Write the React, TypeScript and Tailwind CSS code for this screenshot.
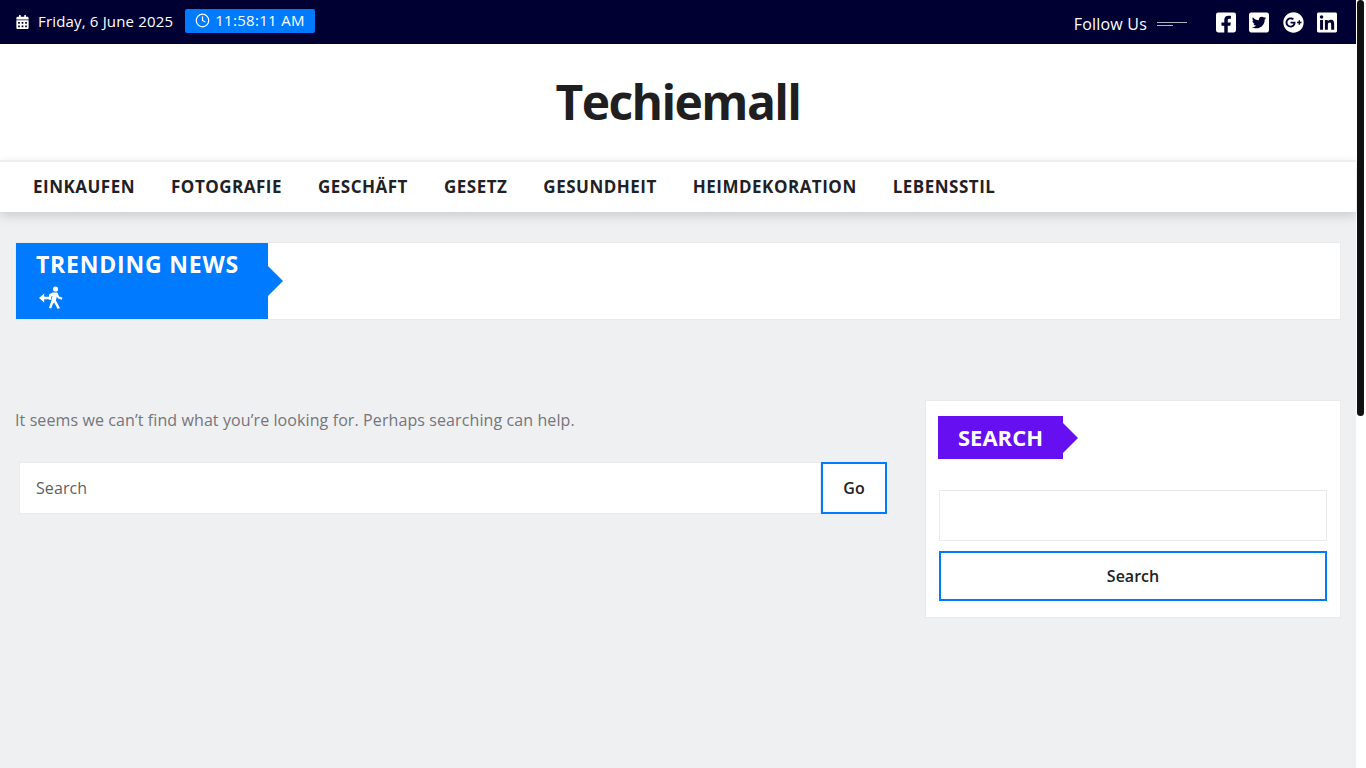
import { Clock } from "lucide-react";
import { FaFacebookSquare, FaTwitterSquare, FaGooglePlus, FaLinkedin, FaCalendarAlt } from "react-icons/fa";

const menu = ["EINKAUFEN", "FOTOGRAFIE", "GESCHÄFT", "GESETZ", "GESUNDHEIT", "HEIMDEKORATION", "LEBENSSTIL"];

function WalkIcon() {
  return (
    <svg width="26" height="24" viewBox="0 0 26 24" fill="white" className="block">
      <circle cx="17.500" cy="3" r="2.600" />
      <path d="M14.500 6.500h4.800l1.900 4 3.300 1.300-.8 2-4-1.600-.8-1.600-1 3.800 4 7.500-2.300 1-3.400-6.500-1.300 1.500-1.700 4.700-2.200-.8 2-5.700 1.500-6-1.300.7v3h-2.200V8.600z" />
      <path d="M1 12l5.200-4.400v3.100h5.800v2.600H6.200v3.100z" />
    </svg>
  );
}

export default function App() {
  return (
    <div className="flex h-screen overflow-hidden bg-white font-['Open_Sans','Noto_Sans',sans-serif]">
      <div className="flex flex-col w-[1356px] shrink-0 bg-[#eff0f2]">
        {/* top bar */}
        <div className="h-[44px] bg-[#000033] flex items-center justify-between pl-4 pr-[19px] text-white shrink-0">
          <div className="flex items-center">
            <FaCalendarAlt className="w-[13px] h-[14px]" />
            <span className="ml-[9px] text-[15px] leading-none mb-0.5 tracking-[0.17px]">Friday, 6 June 2025</span>
            <div className="ml-[12px] mb-[3px] h-[24px] w-[130px] bg-[#007bff] rounded-[2px] flex items-center pl-[10px]">
              <Clock className="w-[15px] h-[15px]" strokeWidth={2} />
              <span className="ml-[5px] text-[15px] leading-none tracking-[0.3px]">11:58:11 AM</span>
            </div>
          </div>
          <div className="flex items-center">
            <span className="text-[16px] leading-none mt-1 tracking-[0.2px]">Follow Us</span>
            <div className="ml-[10px] mr-[29px] flex flex-col gap-[2px] mt-[3px]">
              <div className="w-[30px] h-px bg-white/70" />
              <div className="w-[16px] h-px bg-white/70" />
            </div>
            <div className="flex items-center">
              <FaFacebookSquare className="w-[20px] h-[23px] mr-[13px]" />
              <FaTwitterSquare className="w-[20px] h-[23px] mr-[14px]" />
              <FaGooglePlus className="w-[21px] h-[23px] mr-[13px]" />
              <FaLinkedin className="w-[20px] h-[23px]" />
            </div>
          </div>
        </div>

        {/* site title */}
        <div className="h-[116px] bg-white flex items-center justify-center shrink-0">
          <h1 className="text-[48px] font-bold leading-none text-[#1f1f22] tracking-[-1.6px]">Techiemall</h1>
        </div>

        {/* menu */}
        <nav className="h-[52px] bg-white border-t-2 border-[#eceef0] shadow-[0_4px_10px_rgba(0,0,0,0.15)] flex items-center pl-[15px] shrink-0 z-10">
          {menu.map((m) => (
            <a key={m} className="px-[18px] text-[17px] font-bold text-[#212125] tracking-[0.5px] leading-[16px]">{m}</a>
          ))}
        </nav>

        {/* trending */}
        <div className="mx-[15px] mt-[30px] h-[78px] bg-white border border-[#e9eaec] flex shrink-0">
          <div className="relative w-[252px] h-full bg-[#007bff] text-white pl-[20px] pt-[6px]">
            <div className="text-[23px] font-bold leading-[30px] tracking-[0.8px]">TRENDING NEWS</div>
            <div className="mt-[7px] ml-[2px]"><WalkIcon /></div>
            <div className="absolute left-full top-[23px] w-0 h-0 border-y-[15px] border-y-transparent border-l-[15px] border-l-[#007bff]" />
          </div>
        </div>

        {/* content */}
        <div className="flex items-start mt-[80px] pl-[15px] pr-[15px]">
          <div className="w-[872px] shrink-0">
            <p className="text-[16px] leading-[24px] mt-[8px] text-[#75757a] tracking-[0.1px]">It seems we can’t find what you’re looking for. Perhaps searching can help.</p>
            <div className="flex mt-[30px] ml-[4px] h-[52px]">
              <div className="flex-1 bg-white border border-[#e9eaec] flex items-center pl-[16px] text-[16px] text-[#5f5f64] tracking-[0.1px]">Search</div>
              <div className="w-[66px] bg-white border-2 border-[#007bff] flex items-center justify-center text-[16px] font-semibold text-[#212125]">Go</div>
            </div>
          </div>
          <aside className="ml-[38px] w-[416px] h-[218px] bg-white border border-[#e9eaec] shrink-0 pl-[12px] pr-[13px] pt-[15px]">
            <div className="relative w-[125px] h-[43px] bg-[#6610f2] text-white flex items-center pl-[20px]">
              <span className="text-[22px] font-bold leading-none -translate-y-px">SEARCH</span>
              <div className="absolute left-full top-[7px] w-0 h-0 border-y-[15px] border-y-transparent border-l-[15px] border-l-[#6610f2]" />
            </div>
            <div className="ml-px mt-[31px] h-[51px] bg-white border border-[#e9eaec]" />
            <div className="ml-px mt-[10px] h-[50px] bg-white border-2 border-[#007bff] flex items-center justify-center text-[16px] font-semibold text-[#212125]">Search</div>
          </aside>
        </div>
      </div>

      {/* scrollbar */}
      <div className="w-[10px] shrink-0 bg-white pl-px">
        <div className="w-[7px] h-[416px] bg-[#111] rounded-[4px]" />
      </div>
    </div>
  );
}
